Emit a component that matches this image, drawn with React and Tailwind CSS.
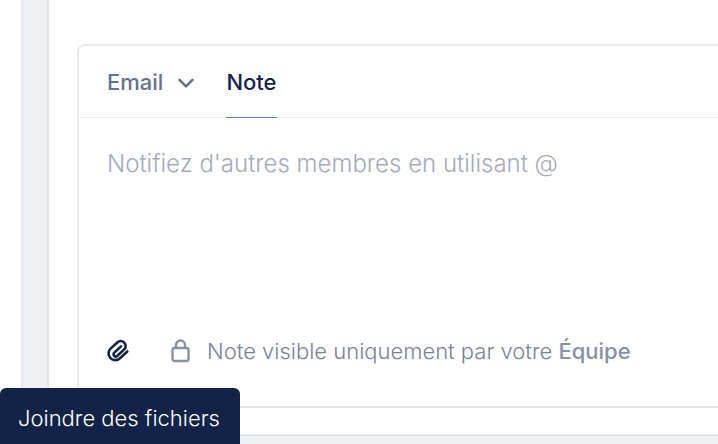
import { useState } from "react";

function ChevronIcon() {
  return (
    <svg className="h-4 w-4" viewBox="0 0 16 16" fill="none" stroke="currentColor" strokeWidth="2.6" strokeLinecap="round" strokeLinejoin="round" aria-hidden="true">
      <path d="M1.500 4.800 8 11.300l6.500-6.500" />
    </svg>
  );
}

function PaperclipIcon() {
  return (
    <svg className="h-6 w-6" viewBox="0 0 24 24" fill="none" stroke="currentColor" strokeWidth="2.6" strokeLinecap="round" strokeLinejoin="round" aria-hidden="true">
      <path d="M14 7.400 7.300 13.600a2.200 2.200 0 0 0-.1 3.200c.9.900 2.300.9 3.200 0l6.600-6.200a4.900 4.900 0 0 0 .2-7c-1.900-1.900-4.900-1.900-6.900-.1L3.800 9.400a6.700 6.700 0 0 0-.4 9.700c2.600 2.700 6.900 2.700 9.600.1l7.300-6.700" />
    </svg>
  );
}

function LockIcon() {
  return (
    <svg className="h-6 w-5" viewBox="0 0 20 24" fill="none" stroke="currentColor" strokeWidth="2.4" strokeLinejoin="round" aria-hidden="true">
      <rect x="1.500" y="9" width="16" height="13" rx="2" />
      <path d="M5 9V6a4.500 4.500 0 0 1 9 0v3" />
    </svg>
  );
}

export default function App() {
  const [note, setNote] = useState("");

  return (
    <div className="relative flex min-h-screen overflow-hidden bg-[#eef0f4] font-['Inter',sans-serif]">
      <aside className="w-[23px] shrink-0 border-r-2 border-[#e6e8ed] bg-white" />
      <main className="ml-6 min-w-0 flex-1 self-start border-b-2 border-l-2 border-[#e2e5eb] bg-white pt-11 pb-[26px] pl-7">
        <section className="rounded-l-lg border-2 border-r-0 border-[#e9ebef] border-b-[#dfe2e9]">
          <nav className="flex h-[72px] gap-8 border-b border-[#eceef1] px-7 text-[22px] font-medium">
            <button type="button" className="flex items-center gap-[15px] pt-0.5 text-[#66718c]">
              Email
              <ChevronIcon />
            </button>
            <button type="button" className="-mb-px border-b border-[#5b7fcb] pt-0.5 text-[#14234a]">
              Note
            </button>
          </nav>
          <textarea
            aria-label="Note"
            value={note}
            onChange={(e) => setNote(e.target.value)}
            placeholder="Notifiez d'autres membres en utilisant @"
            className="block h-[204px] w-full resize-none bg-transparent px-7 pt-[30px] text-[24px] leading-8 font-light text-[#14234a] outline-none placeholder:text-[#a4abbc]"
          />
          <footer className="flex items-center px-7 pt-[13px] pb-[39px] text-[22px] leading-8 font-light text-[#78839a]">
            <button type="button" aria-label="Joindre des fichiers" className="text-[#14234a]">
              <PaperclipIcon />
            </button>
            <span className="ml-10 text-[#8792a6]">
              <LockIcon />
            </span>
            <p className="ml-4 whitespace-nowrap">
              Note visible uniquement par votre <strong className="font-medium text-[#8792a6]">Équipe</strong>
            </p>
          </footer>
        </section>
      </main>
      <div role="tooltip" className="absolute bottom-0 left-0 rounded-t-md bg-[#132347] pt-[14px] pr-5 pb-[10px] pl-[18px] text-[22px] leading-8 font-light text-white">
        Joindre des fichiers
      </div>
    </div>
  );
}
